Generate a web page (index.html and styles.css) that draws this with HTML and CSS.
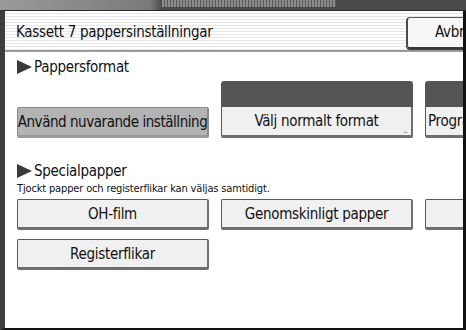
FILE: index.html
```html
<!DOCTYPE html>
<html>
<head>
<meta charset="utf-8">
<link rel="stylesheet" href="styles.css">
</head>
<body>
<div class="screen">
    <div class="topbar"><div class="topbarMsg"></div></div>

    <div class="main">
        <div class="titleBar">
            <div class="titleText">Kassett 7 pappersinställningar</div>
            <div class="btn btnCancel">Avbryt</div>
        </div>

        <div class="content">
            <div class="heading"><span class="arrow"></span>Pappersformat</div>

            <div class="row rowFormat">
                <div class="btn btnSelected">Använd nuvarande inställning</div>
                <div class="tabBtn">
                    <div class="tabHead"></div>
                    <div class="btn btnTab">Välj normalt format<span class="more">...</span></div>
                </div>
                <div class="tabBtn">
                    <div class="tabHead"></div>
                    <div class="btn btnTab btnLeft">Programmera format</div>
                </div>
            </div>

            <div class="heading headingSpecial"><span class="arrow"></span>Specialpapper</div>
            <div class="note">Tjockt papper och registerflikar kan väljas samtidigt.</div>

            <div class="row rowSpecial">
                <div class="btn">OH-film</div>
                <div class="btn">Genomskinligt papper</div>
                <div class="btn">Tjockt papper</div>
            </div>
            <div class="row rowSpecial">
                <div class="btn">Registerflikar</div>
            </div>
        </div>
    </div>
</div>
</body>
</html>
```

FILE: styles.css
```css
body{
    margin: 0;
    background: #fff;
    font-family: "DejaVu Sans Condensed", "Liberation Sans", sans-serif;
    letter-spacing: -0.3px;
    color: #111;
}

.screen{
    width: 466px;
    height: 330px;
    display: flex;
    flex-direction: column;
    overflow: hidden;
}

.topbar{
    height: 10px;
    flex-shrink: 0;
    background: linear-gradient(to right, #9a9a9a 0, #7a7a7a 150px, #4a4a4a 162px, #4a4a4a 100%);
    border-bottom: 1px solid #2a2a2a;
    display: flex;
}

.topbarMsg{
    margin-left: 162px;
    width: 174px;
    height: 7px;
    background: repeating-linear-gradient(to right, #8c8c8c 0, #8c8c8c 2px, #5a5a5a 2px, #5a5a5a 3px);
}

.main{
    flex: 1;
    display: flex;
    flex-direction: column;
    border-left: 5px solid #3e3e3e;
    border-right: 3px solid #111;
    border-bottom: 2px solid #111;
    overflow: hidden;
    background: #fff;
}

.titleBar{
    height: 39px;
    flex-shrink: 0;
    display: flex;
    align-items: center;
    justify-content: space-between;
    padding-left: 11px;
    background: repeating-linear-gradient(to bottom, #fff 0, #fff 2px, #e6e6e6 2px, #e6e6e6 3px);
    border-bottom: 2px solid #9a9a9a;
}

.titleText{
    font-size: 15px;
    padding-top: 2px;
}

.btn{
    box-sizing: border-box;
    width: 192px;
    height: 31px;
    flex-shrink: 0;
    display: flex;
    align-items: center;
    justify-content: center;
    background: #f0f0f0;
    border: 1px solid #5a5a5a;
    border-bottom: 3px solid #6e6e6e;
    border-right: 2px solid #6e6e6e;
    border-radius: 2px;
    font-size: 15px;
    white-space: nowrap;
    overflow: hidden;
}

.btnCancel{
    width: 100px;
    height: 33px;
    margin-top: 5px;
    margin-right: -43px;
    border-left: 2px solid #4a4a4a;
    border-bottom: 3px solid #3a3a3a;
    border-radius: 4px;
    background: #f7f7f7;
}

.content{
    padding-left: 12px;
    display: flex;
    flex-direction: column;
}

.heading{
    display: flex;
    align-items: center;
    font-size: 15px;
    line-height: 18px;
    margin-top: 6px;
}

.arrow{
    width: 0;
    height: 0;
    border-top: 7px solid transparent;
    border-bottom: 7px solid transparent;
    border-left: 15px solid #3a3a3a;
    margin-right: 2px;
}

.row{
    display: flex;
    gap: 12px;
}

.rowFormat{
    margin-top: 5px;
    align-items: flex-end;
}

.btnSelected{
    background: #b3b3b3;
    border-color: #8a8a8a;
    border-bottom-color: #9a9a9a;
    letter-spacing: -0.45px;
}

.tabBtn{
    width: 192px;
    flex-shrink: 0;
    display: flex;
    flex-direction: column;
}

.tabHead{
    height: 26px;
    background: #555;
    border-radius: 3px 3px 0 0;
}

.btnTab{
    border-top: none;
    border-radius: 0 0 2px 2px;
    position: relative;
}

.btnLeft{
    justify-content: flex-start;
    padding-left: 2px;
}

.more{
    position: absolute;
    right: 4px;
    bottom: 0;
    font-size: 8px;
    line-height: 8px;
    color: #777;
    letter-spacing: -1px;
}

.headingSpecial{
    margin-top: 24px;
}

.note{
    font-size: 11px;
    line-height: 13px;
    margin-top: 2px;
    letter-spacing: -0.15px;
}

.rowSpecial{
    margin-top: 9px;
}

.note + .rowSpecial{
    margin-top: 4px;
}
```
